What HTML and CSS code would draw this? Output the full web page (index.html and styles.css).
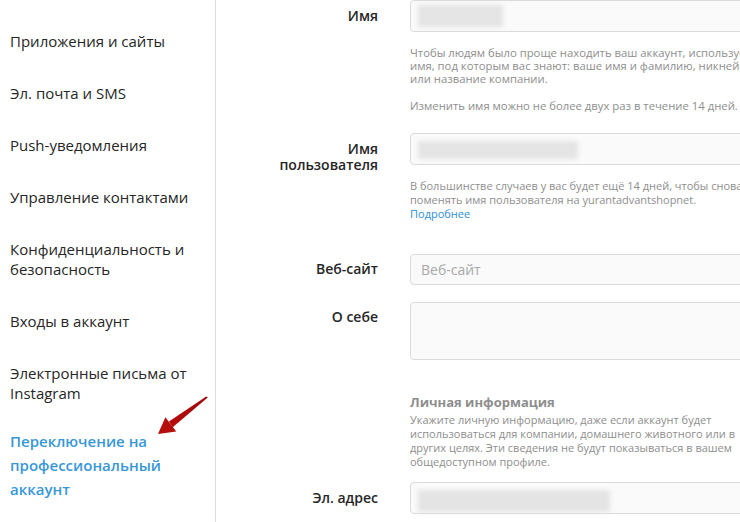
FILE: index.html
```html
<!DOCTYPE html>
<html lang="ru">
<head>
    <meta charset="UTF-8">
    <meta name="viewport" content="width=device-width, initial-scale=1.0">
    <title>Редактировать профиль</title>
    <link rel="stylesheet" href="styles.css">
</head>
<body>
    <div class="page">
        <nav class="sidebar">
            <div class="menu-item">Приложения и сайты</div>
            <div class="menu-item">Эл. почта и SMS</div>
            <div class="menu-item">Push-уведомления</div>
            <div class="menu-item">Управление контактами</div>
            <div class="menu-item">Конфиденциальность и безопасность</div>
            <div class="menu-item">Входы в аккаунт</div>
            <div class="menu-item">Электронные письма от Instagram</div>
            <div class="menu-item active">Переключение на профессиональный аккаунт</div>
        </nav>

        <main class="content">
            <div class="row row-name">
                <label class="label">Имя</label>
                <div class="field">
                    <div class="input"><span class="blurred name-blur"></span></div>
                    <p class="hint hint-name">Чтобы людям было проще находить ваш аккаунт, используйте<br>имя, под которым вас знают: ваше имя и фамилию, никнейм<br>или название компании.</p>
                    <p class="hint hint-name second">Изменить имя можно не более двух раз в течение 14 дней.</p>
                </div>
            </div>

            <div class="row row-user">
                <label class="label">Имя пользователя</label>
                <div class="field">
                    <div class="input"><span class="blurred user-blur"></span></div>
                    <p class="hint hint-user">В большинстве случаев у вас будет ещё 14 дней, чтобы снова поменять имя пользователя на yurantadvantshopnet.<br><a href="#" class="link">Подробнее</a></p>
                </div>
            </div>

            <div class="row row-site">
                <label class="label">Веб-сайт</label>
                <div class="field">
                    <div class="input placeholder">Веб-сайт</div>
                </div>
            </div>

            <div class="row row-bio">
                <label class="label">О себе</label>
                <div class="field">
                    <div class="input textarea"></div>
                </div>
            </div>

            <div class="row row-info">
                <div class="label"></div>
                <div class="field">
                    <h3 class="section-title">Личная информация</h3>
                    <p class="section-text">Укажите личную информацию, даже если аккаунт будет использоваться для компании, домашнего животного или в других целях. Эти сведения не будут показываться в вашем общедоступном профиле.</p>
                </div>
            </div>

            <div class="row row-mail">
                <label class="label">Эл. адрес</label>
                <div class="field">
                    <div class="input"><span class="blurred mail-blur"></span></div>
                </div>
            </div>
        </main>
    </div>

    <!-- red pointer drawn over the menu -->
    <svg class="pointer" width="66" height="50" viewBox="0 0 66 50">
        <defs>
            <linearGradient id="arrowGrad" x1="0" y1="1" x2="1" y2="0">
                <stop offset="0" stop-color="#b80d0d"/>
                <stop offset="1" stop-color="#9c0a0a"/>
            </linearGradient>
        </defs>
        <polygon points="57.8,7.6 56.2,6.4 18.9,31.6 22.7,37.2" fill="url(#arrowGrad)"/>
        <polygon points="8,44 15.4,27.2 26.2,41.6" fill="#b50c0c"/>
    </svg>
</body>
</html>
```

FILE: styles.css
```css
/* Global */
body {
    margin: 0;
    font-family: "Open Sans", "Liberation Sans", sans-serif;
    background-color: #fff;
    color: #262626;
    overflow: hidden;
}

.page {
    display: flex;
    min-height: 100vh;
}

/* Sidebar menu */
.sidebar {
    width: 215px;
    flex-shrink: 0;
    border-right: 1px solid #dbdbdb;
    padding-top: 15px;
}

.menu-item {
    padding: 16px 10px;
    font-size: 15px;
    line-height: 20px;
    color: #262626;
}

.menu-item.active {
    padding-top: 10px;
    color: #3897d8;
    font-weight: 600;
    line-height: 24px;
}

/* Form */
.content {
    flex: 1;
    overflow: hidden;
}

.row {
    display: flex;
}

.label {
    box-sizing: border-box;
    width: 194px;
    flex-shrink: 0;
    padding: 8px 32px 0 52px;
    text-align: right;
    font-size: 14px;
    font-weight: 600;
    line-height: 16px;
    color: #262626;
}

.field {
    width: 345px;
    flex-shrink: 0;
}

.input {
    box-sizing: border-box;
    width: 360px;
    height: 32px;
    border: 1px solid #dbdbdb;
    border-radius: 4px;
    background-color: #fafafa;
    padding: 4px 7px;
}

.blurred {
    display: block;
    height: 22px;
    background-color: #e4e4e4;
    filter: blur(2px);
}

.name-blur { width: 85px; }
.user-blur { width: 160px; margin-top: 3px; height: 18px; }
.mail-blur { width: 192px; margin-top: 3px; }

.placeholder {
    height: 31px;
    padding: 4px 10px;
    font-size: 14px;
    line-height: 21px;
    color: #a8a8a8;
}

.textarea {
    height: 58px;
}

.hint {
    margin: 14px 0 0;
    font-size: 11.3px;
    line-height: 13px;
    color: #8e8e8e;
}

.hint-name {
    white-space: nowrap;
}

.hint.second {
    margin-top: 14px;
}

.hint-user {
    font-size: 11px;
    line-height: 14px;
}

.link {
    color: #2d8fd5;
    text-decoration: none;
}

.row-name { margin-top: 0; }
.row-user { margin-top: 21px; }
.row-site { margin-top: 33px; }
.row-bio { margin-top: 17px; }
.row-info { margin-top: 34px; }
.row-mail { margin-top: 13px; }

.row-site .label { padding-top: 7px; }
.row-bio .label { padding-top: 7px; }

.section-title {
    margin: 0;
    font-size: 13px;
    line-height: 16px;
    font-weight: 700;
    color: #8e8e8e;
}

.section-text {
    margin: 3px 0 0;
    font-size: 11px;
    line-height: 14px;
    color: #8e8e8e;
}

/* Annotation */
.pointer {
    position: absolute;
    left: 150px;
    top: 390px;
}
```
